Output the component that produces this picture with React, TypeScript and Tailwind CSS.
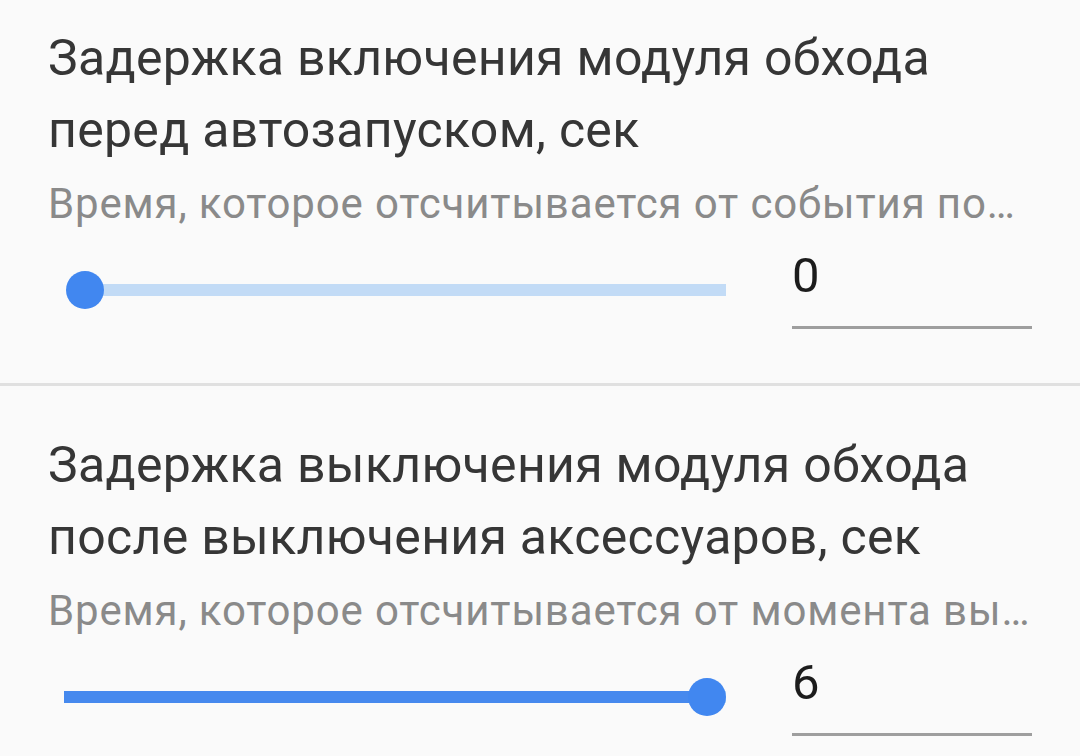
import React from "react";

type Item = {
  title: string[];
  subtitle: string;
  value: number;
  max: number;
};

const items: Item[] = [
  {
    title: ["Задержка включения модуля обхода", "перед автозапуском, сек"],
    subtitle: "Время, которое отсчитывается от события постановки в охрану",
    value: 0,
    max: 6,
  },
  {
    title: ["Задержка выключения модуля обхода", "после выключения аксессуаров, сек"],
    subtitle: "Время, которое отсчитывается от момента выключения аксессуаров",
    value: 6,
    max: 6,
  },
];

function Slider({ value, max }: { value: number; max: number }) {
  const pct = (value / max) * 100;
  return (
    <div className="relative h-[80px] w-[662px]">
      <div className="absolute inset-y-0 left-[21px] right-[19px]">
        <div
          className="absolute right-[-19px] top-[34px] h-[12px] bg-[#c2dbf6]"
          style={{ left: `${pct}%` }}
        />
        {value > 0 && (
          <div
            className="absolute left-[-21px] top-[34px] h-[12px] bg-[#4689ee]"
            style={{ width: `calc(${pct}% + 21px)` }}
          />
        )}
        <div
          className="absolute top-[21px] h-[38px] w-[38px] -translate-x-1/2 rounded-full bg-[#4187f0]"
          style={{ left: `${pct}%` }}
        />
      </div>
    </div>
  );
}

function Section({ item, first }: { item: Item; first: boolean }) {
  return (
    <div
      className={
        "flex flex-col pl-[48px] pr-[48px] pb-[53px] " +
        (first ? "pt-[22px]" : "pt-[43px]")
      }
    >
      <div className="text-[50px] leading-[72px] tracking-[0.3px] text-[#363636]">
        {item.title.map((t) => (
          <div key={t} className="whitespace-nowrap">
            {t}
          </div>
        ))}
      </div>
      <div className="mt-[13px] truncate text-[42px] leading-[50px] tracking-[0.85px] text-[#8a8a8a]">
        {item.subtitle}
      </div>
      <div className="mt-[21px] flex items-start pl-[16px]">
        <Slider value={item.value} max={item.max} />
        <div className="ml-[66px] h-[79px] w-[240px] border-b-[3px] border-[#9e9e9e] text-[49px] leading-[52px] text-[#1c1c1c]">
          {item.value}
        </div>
      </div>
    </div>
  );
}

export default function App() {
  return (
    <div
      className="h-[756px] w-[1080px] overflow-hidden bg-[#fafafa]"
      style={{ fontFamily: "Roboto, 'Noto Sans', sans-serif" }}
    >
      <Section item={items[0]} first />
      <div className="h-[3px] bg-[#e0e0e0]" />
      <Section item={items[1]} first={false} />
    </div>
  );
}
